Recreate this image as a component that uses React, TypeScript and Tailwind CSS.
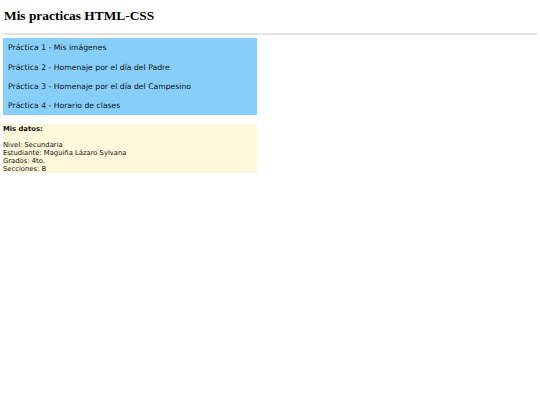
const practicas = [
  "Práctica 1 - Mis imágenes",
  "Práctica 2 - Homenaje por el día del Padre",
  "Práctica 3 - Homenaje por el día del Campesino",
  "Práctica 4 - Horario de clases",
];

export default function App() {
  return (
    <div className="min-h-[405px] w-[540px] bg-white px-[3px] text-[#111]">
      <h1 className="pt-[8px] pl-[1px] font-['Liberation_Serif',serif] text-[13.4px] leading-[16px] font-bold text-black">
        Mis practicas HTML-CSS
      </h1>
      <hr className="mt-[9px] mb-[3px] w-[534px] border-t-2 border-[#e3e3e3]" />

      <ul className="w-[254px] bg-[#87cefa] font-['DejaVu_Sans',Verdana,sans-serif] text-[7.7px]">
        {practicas.map((p) => (
          <li key={p} className="flex h-[19.25px] items-center pt-[1px] pl-[5px]">
            {p}
          </li>
        ))}
      </ul>

      <div className="mt-[9px] w-[254px] bg-[#fff8dc] pt-[1px] font-['DejaVu_Sans',Verdana,sans-serif] text-[6.8px] leading-[8px]">
        <p className="font-bold">Mis datos:</p>
        <p className="mt-[8px]">Nivel: Secundaria</p>
        <p>Estudiante: Maguiña Lázaro Sylvana</p>
        <p>Grados: 4to.</p>
        <p>Secciones: B</p>
      </div>
    </div>
  );
}
